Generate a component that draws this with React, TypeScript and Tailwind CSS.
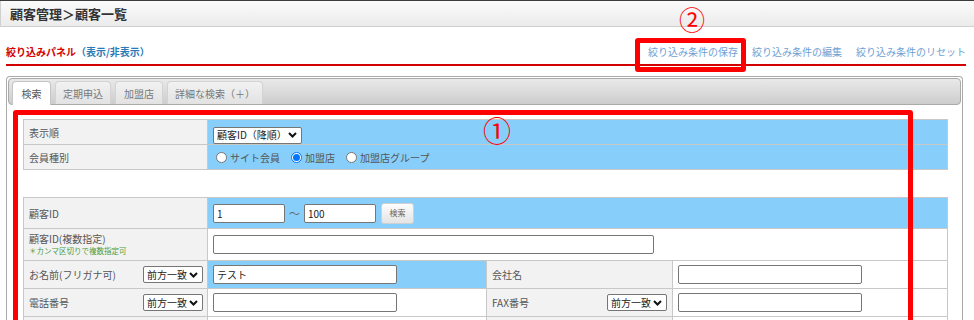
import React from 'react';

const Chevron = () => (
  <svg width="9" height="6" viewBox="0 0 9 6" className="shrink-0">
    <path d="M1 1l3.5 3.5L8 1" fill="none" stroke="#111" strokeWidth="2" />
  </svg>
);

function FakeSelect({ label, className }: { label: string; className: string }) {
  return (
    <span
      className={`inline-flex h-[17px] items-center justify-between rounded-[2px] border border-[#767676] bg-white pl-[3px] pr-[4px] text-[10px] leading-none text-[#222] ${className}`}
    >
      <span>{label}</span>
      <Chevron />
    </span>
  );
}

function TextBox({ className, value = '' }: { className: string; value?: string }) {
  return (
    <input
      type="text"
      readOnly
      value={value}
      className={`block h-[19px] rounded-[2px] border border-[#767676] bg-white px-[3px] text-[10px] text-[#222] outline-none ${className}`}
    />
  );
}

function Radio({ checked, label }: { checked?: boolean; label: string }) {
  return (
    <label className="flex items-center gap-[3px]">
      {checked ? (
        <span className="flex h-[11px] w-[11px] items-center justify-center rounded-full border border-[#0075ff] bg-white">
          <span className="h-[7px] w-[7px] rounded-full bg-[#0075ff]" />
        </span>
      ) : (
        <span className="h-[11px] w-[11px] rounded-full border border-[#767676] bg-white" />
      )}
      <span>{label}</span>
    </label>
  );
}

const labelCell = 'border border-[#c8c8c8] bg-[#f2f2f2] pl-[5px] text-[10px] text-[#555] align-middle';
const blueCell = 'border border-[#c8c8c8] bg-[#87cefa] pl-[5px] align-middle';
const whiteCell = 'border border-[#c8c8c8] bg-white pl-[5px] align-middle';

const tabs = [
  { name: '検索', w: 'w-[39px]', active: true },
  { name: '定期申込', w: 'w-[56px]' },
  { name: '加盟店', w: 'w-[48px]' },
  { name: '詳細な検索（＋）', w: 'w-[96px]' },
];

export default function App() {
  return (
    <div className="relative h-[320px] w-[974px] overflow-hidden bg-white font-[family-name:'Noto_Sans_CJK_JP',sans-serif] text-[#555]">
      {/* ページタイトル */}
      <div className="h-[1px] bg-[#3c3c3c]" />
      <header className="flex h-[26px] items-center border-b border-l border-[#d0d0d0] bg-gradient-to-b from-[#fbfbfb] to-[#ebebeb] pl-[9px]">
        <h1 className="text-[13px] font-bold text-[#333]">顧客管理＞顧客一覧</h1>
      </header>

      {/* 絞り込みパネル見出し */}
      <div className="mx-[6px] w-[960px]">
        <div className="flex h-[37px] items-end justify-between pb-[5px] text-[10px] leading-[14px]">
          <div className="font-bold">
            <span className="text-[#d40000]">絞り込みパネル</span>
            <span className="text-[#2a7ab8]">（表示/非表示）</span>
          </div>
          <div className="flex gap-[14px] text-[#6d9fd5]">
            <a>絞り込み条件の保存</a>
            <a>絞り込み条件の編集</a>
            <a>絞り込み条件のリセット</a>
          </div>
        </div>
        <div className="h-[2px] bg-[#d40000]" />
      </div>

      {/* タブ */}
      <div className="ml-[6px] mt-[10px] w-[957px] rounded-t-[4px] border-x border-t border-[#aaa] p-[1px]">
        <div className="flex h-[27px] items-end gap-[4px] rounded-[4px] border border-[#aaa] bg-gradient-to-b from-[#e9e9e9] to-[#cdcdcd] pl-[3px]">
          {tabs.map((t) => (
            <div
              key={t.name}
              className={`flex h-[23px] items-center justify-center rounded-t-[4px] border border-b-0 text-[10px] ${t.w} ${
                t.active
                  ? 'mb-[-1px] h-[24px] border-[#c5c5c5] bg-white text-[#555]'
                  : 'border-[#d3d3d3] bg-gradient-to-b from-[#f2f2f2] to-[#e2e2e2] text-[#777]'
              }`}
            >
              {t.name}
            </div>
          ))}
        </div>

        <div className="pl-[15px] pt-[14px]">
          {/* 表示順・会員種別 */}
          <table className="w-[925px] table-fixed">
            <colgroup>
              <col className="w-[184px]" />
              <col />
            </colgroup>
            <tbody>
              <tr className="h-[25px]">
                <td className={labelCell}>表示順</td>
                <td className={blueCell}>
                  <FakeSelect label="顧客ID（降順）" className="w-[89px]" />
                </td>
              </tr>
              <tr className="h-[25px]">
                <td className={labelCell}>会員種別</td>
                <td className={blueCell}>
                  <div className="flex items-center gap-[11px] pl-[3px] text-[10px] text-[#555]">
                    <Radio label="サイト会員" />
                    <Radio checked label="加盟店" />
                    <Radio label="加盟店グループ" />
                  </div>
                </td>
              </tr>
            </tbody>
          </table>

          {/* 検索条件 */}
          <table className="mt-[27px] w-[925px] table-fixed">
            <colgroup>
              <col className="w-[184px]" />
              <col className="w-[279px]" />
              <col className="w-[186px]" />
              <col />
            </colgroup>
            <tbody>
              <tr className="h-[31px]">
                <td className={labelCell}>顧客ID</td>
                <td className={blueCell} colSpan={3}>
                  <div className="flex items-center">
                    <TextBox className="w-[72px]" value="1" />
                    <span className="mx-[4px] text-[11px] text-[#666]">～</span>
                    <TextBox className="w-[72px]" value="100" />
                    <button className="ml-[5px] h-[21px] w-[33px] rounded-[3px] border border-[#cfcfcf] bg-gradient-to-b from-[#fdfdfd] to-[#e4e4e4] text-[8px] text-[#666]">
                      検索
                    </button>
                  </div>
                </td>
              </tr>
              <tr className="h-[32px]">
                <td className={labelCell}>
                  <div className="leading-[12px]">顧客ID(複数指定)</div>
                  <div className="text-[7.5px] leading-[11px] text-[#4a9a3c]">＊カンマ区切りで複数指定可</div>
                </td>
                <td className={whiteCell} colSpan={3}>
                  <TextBox className="w-[441px]" />
                </td>
              </tr>
              <tr className="h-[28px]">
                <td className={labelCell}>
                  <div className="flex items-center justify-between pr-[4px]">
                    <span>お名前(フリガナ可)</span>
                    <FakeSelect label="前方一致" className="w-[60px]" />
                  </div>
                </td>
                <td className={blueCell}>
                  <TextBox className="w-[184px]" value="テスト" />
                </td>
                <td className={labelCell}>会社名</td>
                <td className={whiteCell}>
                  <TextBox className="w-[184px]" />
                </td>
              </tr>
              <tr className="h-[28px]">
                <td className={labelCell}>
                  <div className="flex items-center justify-between pr-[4px]">
                    <span>電話番号</span>
                    <FakeSelect label="前方一致" className="w-[60px]" />
                  </div>
                </td>
                <td className={whiteCell}>
                  <TextBox className="w-[184px]" />
                </td>
                <td className={labelCell}>
                  <div className="flex items-center justify-between pr-[5px]">
                    <span>FAX番号</span>
                    <FakeSelect label="前方一致" className="w-[60px]" />
                  </div>
                </td>
                <td className={whiteCell}>
                  <TextBox className="w-[184px]" />
                </td>
              </tr>
              <tr className="h-[28px]">
                <td className={labelCell} />
                <td className={whiteCell} />
                <td className={labelCell} />
                <td className={whiteCell} />
              </tr>
            </tbody>
          </table>
        </div>
      </div>

      {/* 注釈（赤枠・番号） */}
      <div className="pointer-events-none absolute left-[13px] top-[110px] h-[260px] w-[900px] rounded-[3px] border-[5px] border-[#ff0000]" />
      <div className="pointer-events-none absolute left-[483px] top-[116px] text-[28px] leading-none text-[#ff0000]">①</div>
      <div className="pointer-events-none absolute left-[635px] top-[38px] h-[34px] w-[111px] rounded-[3px] border-[5px] border-[#ff0000]" />
      <div className="pointer-events-none absolute left-[679px] top-[6px] text-[26px] leading-none text-[#ff0000]">②</div>
    </div>
  );
}
